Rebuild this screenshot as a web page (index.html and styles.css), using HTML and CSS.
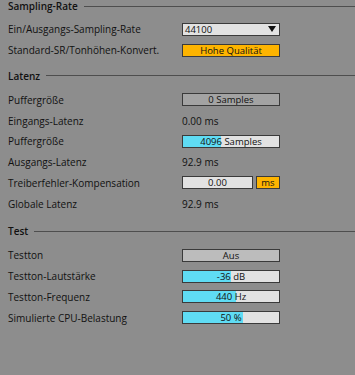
FILE: index.html
```html
<!DOCTYPE html>
<html lang="de">
<head>
  <meta charset="UTF-8">
  <meta name="viewport" content="width=device-width, initial-scale=1.0">
  <title>Audio-Einstellungen</title>
  <link rel="stylesheet" href="styles.css">
</head>
<body>
  <div class="prefs">
    <section class="group">
      <div class="group-head"><span>Sampling-Rate</span><i class="rule"></i></div>
      <div class="row">
        <span class="label">Ein/Ausgangs-Sampling-Rate</span>
        <div class="box select">
          <span>44100</span>
          <svg class="arrow" width="8" height="6" viewBox="0 0 8 6"><path d="M0 0H8L4 6Z" fill="#111"/></svg>
        </div>
      </div>
      <div class="row">
        <span class="label">Standard-SR/Tonhöhen-Konvert.</span>
        <div class="box toggle on">Hohe Qualität</div>
      </div>
    </section>

    <section class="group">
      <div class="group-head"><span>Latenz</span><i class="rule"></i></div>
      <div class="row">
        <span class="label">Puffergröße</span>
        <div class="box toggle off">0 Samples</div>
      </div>
      <div class="row">
        <span class="label">Eingangs-Latenz</span>
        <span class="value">0.00 ms</span>
      </div>
      <div class="row">
        <span class="label">Puffergröße</span>
        <div class="box slider"><div class="fill" style="width: 40%"></div><span>4096 Samples</span></div>
      </div>
      <div class="row">
        <span class="label">Ausgangs-Latenz</span>
        <span class="value">92.9 ms</span>
      </div>
      <div class="row">
        <span class="label">Treiberfehler-Kompensation</span>
        <div class="pair">
          <div class="box number">0.00</div>
          <div class="box toggle on unit">ms</div>
        </div>
      </div>
      <div class="row">
        <span class="label">Globale Latenz</span>
        <span class="value">92.9 ms</span>
      </div>
    </section>

    <section class="group">
      <div class="group-head"><span>Test</span><i class="rule"></i></div>
      <div class="row">
        <span class="label">Testton</span>
        <div class="box toggle off light">Aus</div>
      </div>
      <div class="row">
        <span class="label">Testton-Lautstärke</span>
        <div class="box slider"><div class="fill" style="width: 50%"></div><span>-36 dB</span></div>
      </div>
      <div class="row">
        <span class="label">Testton-Frequenz</span>
        <div class="box slider"><div class="fill" style="width: 55%"></div><span>440 Hz</span></div>
      </div>
      <div class="row">
        <span class="label">Simulierte CPU-Belastung</span>
        <div class="box slider"><div class="fill" style="width: 63%"></div><span>50 %</span></div>
      </div>
    </section>
  </div>
</body>
</html>
```

FILE: styles.css
```css
html,
body {
  margin: 0;
  padding: 0;
  background-color: #8d8d8d;
  height: 100%;
}

body {
  font-family: "Open Sans", "Liberation Sans", sans-serif;
  font-size: 10px;
  color: #111;
}

.prefs {
  padding: 0 0 0 8px;
}

.group {
  margin-bottom: 10px;
}

.group:last-child {
  margin-top: 12px;
}

.group-head {
  display: flex;
  align-items: center;
  height: 12px;
  line-height: 12px;
  margin-top: -1px;
  margin-bottom: 8px;
  font-weight: 600;
}

.group:first-child .group-head {
  margin-top: 0;
  margin-bottom: 7px;
}

.rule {
  flex: 1;
  margin-left: 6px;
  border-top: 1px solid #4e4e4e;
}

.row {
  display: grid;
  grid-template-columns: 174px 98px;
  align-items: center;
  height: 20.75px;
}

.box {
  box-sizing: border-box;
  height: 13px;
  border: 1px solid #3a3a3a;
  font-size: 9.5px;
  line-height: 11px;
  text-align: center;
  position: relative;
  overflow: hidden;
}

.select {
  display: flex;
  justify-content: space-between;
  align-items: center;
  padding: 0 3px 0 2px;
  background-color: #e2e2e2;
  text-align: left;
}

.toggle.on {
  background-color: #fdb400;
}

.toggle.off {
  background-color: #a3a3a3;
}

.toggle.off.light {
  background-color: #bcbcbc;
}

.slider {
  background-color: #e2e2e2;
}

.slider .fill {
  position: absolute;
  left: 0;
  top: 0;
  bottom: 0;
  background-color: #5fdcf4;
}

.slider span {
  position: relative;
}

.pair {
  display: flex;
  gap: 3px;
}

.number {
  width: 71px;
  background-color: #e2e2e2;
}

.unit {
  flex: 1;
}
```
